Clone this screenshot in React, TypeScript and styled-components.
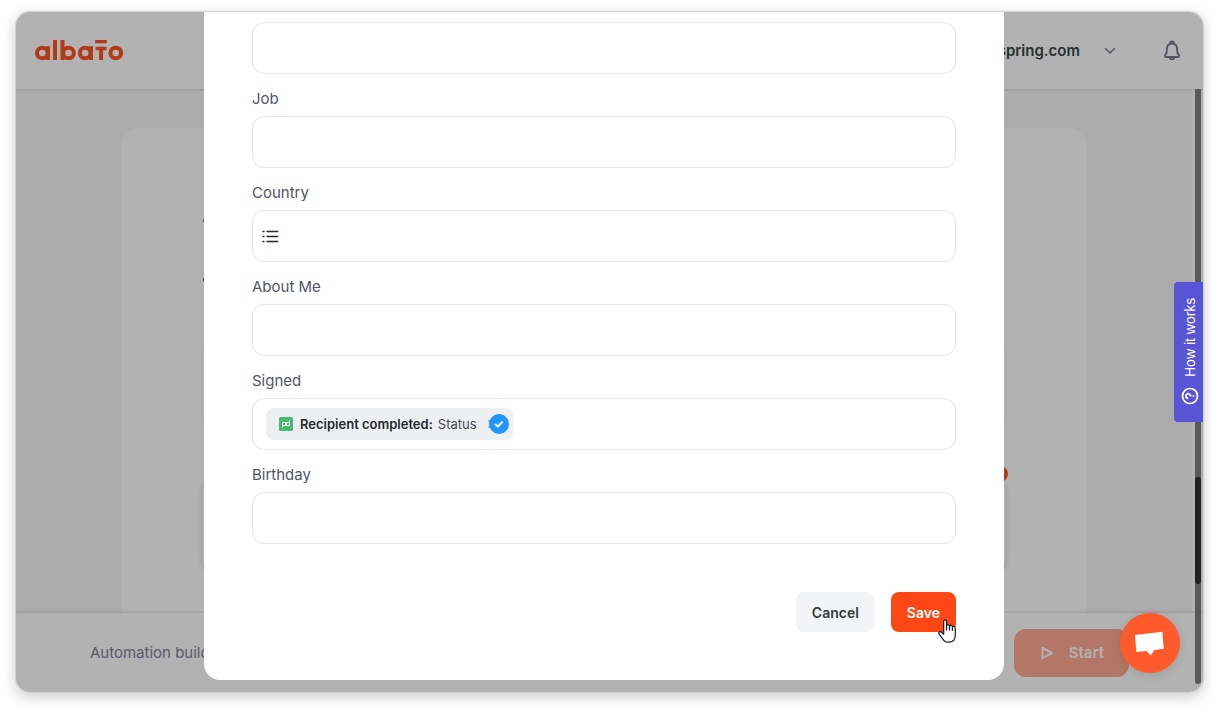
import React from "react";
import styled, { createGlobalStyle, css } from "styled-components";

const GlobalStyle = createGlobalStyle`
  *, *::before, *::after { box-sizing: border-box; }
  body {
    margin: 0;
    background: #fff;
    font-family: Inter, "Liberation Sans", sans-serif;
    color: #2b3135;
  }
  button, input { font-family: inherit; }
  svg { flex: none; }
`;

const Page = styled.div`
  display: flow-root;
`;

const Frame = styled.div`
  position: relative;
  display: grid;
  grid-template-columns: minmax(0, 1fr);
  grid-template-rows: 77px 1fr 79px;
  min-height: calc(100vh - 32px);
  margin: 12px 16px 20px;
  border-radius: 14px;
  overflow: clip;
  box-shadow: 0 0 0 1px #d0d1d1, 0 4px 14px 1px rgba(0, 0, 0, 0.2);
`;

const Header = styled.header`
  grid-area: 1 / 1;
  z-index: 1;
  display: flex;
  align-items: center;
  padding: 0 22px 0 19px;
  background: #fff;
  box-shadow: 0 1px 3px rgba(0, 0, 0, 0.12);
`;

const LogoLink = styled.a`
  display: flex;
  margin-right: auto;
`;

const IconButton = styled.button`
  display: flex;
  padding: 0;
  border: 0;
  background: none;
  color: #787b90;
`;

const Account = styled.button`
  display: flex;
  align-items: center;
  gap: 24px;
  margin-right: 47px;
  padding: 0;
  border: 0;
  background: none;
  color: #787b90;
`;

const AccountName = styled.span`
  color: #3c4444;
  font-size: 15px;
  font-weight: 600;
  line-height: 22px;
`;

const Main = styled.main`
  grid-area: 2 / 1;
  display: flex;
  justify-content: center;
  padding: 39px 11px 0 0;
  background: linear-gradient(to left, #fff 11px, #f7f7f7 11px);
`;

const Sheet = styled.section`
  flex: 0 1 966px;
  padding: 91px 82px 0;
  border-radius: 20px 20px 0 0;
  background: #fff;
`;

const Hints = styled.ul`
  display: grid;
  gap: 56px;
  margin: 0 0 55px;
  padding: 0;
  list-style: none;
`;

const Hint = styled.li`
  width: 8px;
  height: 3px;
  background: #8a6a2c;
`;

const Steps = styled.div`
  display: grid;
  gap: 52px;
`;

const Step = styled.div<{ $raised?: boolean }>`
  position: relative;
  height: 92px;
  border-radius: 12px;
  background: #fff;
  box-shadow: 0 0 ${(p) => (p.$raised ? "6px" : "2px")} rgba(0, 0, 0, 0.2);
`;

const StepBadge = styled.span`
  position: absolute;
  top: -14px;
  right: -3px;
  width: 16px;
  height: 16px;
  border-radius: 50%;
  background: #ff5722;
`;

const Footer = styled.footer`
  grid-area: 3 / 1;
  display: flex;
  align-items: center;
  justify-content: space-between;
  padding: 0 74px;
  background: #fff;
  box-shadow: 0 -1px 3px rgba(0, 0, 0, 0.14);
`;

const FooterText = styled.span`
  color: #7f8298;
  font-size: 15px;
  line-height: 22px;
`;

const StartButton = styled.button`
  display: flex;
  align-items: center;
  gap: 14px;
  height: 48px;
  padding: 0 25px;
  border: 0;
  border-radius: 12px;
  background: #ffab94;
  color: #fff;
  font-size: 15px;
  font-weight: 600;
`;

const Overlay = styled.div`
  grid-area: 1 / 1 / 4 / 2;
  z-index: 2;
  display: flex;
  align-items: flex-start;
  justify-content: center;
  padding: 0 11px 12px 0;
  background: rgba(0, 0, 0, 0.3);
`;

const Modal = styled.form`
  flex: 0 1 800px;
  padding: 10px 48px 48px;
  border-radius: 0 0 16px 16px;
  background: #fff;
`;

const Field = styled.div`
  display: grid;
  gap: 6px;
  margin-bottom: 14px;
`;

const Label = styled.label`
  color: #545567;
  font-size: 15px;
  line-height: 22px;
`;

const Control = styled.div<{ $tight?: boolean }>`
  display: flex;
  align-items: center;
  gap: 12px;
  height: 52px;
  padding: 0 ${(p) => (p.$tight ? "9px" : "13px")};
  border: 1px solid #e4e6e8;
  border-radius: 12px;
  background: #fff;
`;

const TextInput = styled.input`
  flex: 1;
  min-width: 0;
  height: 48px;
  padding: 0;
  border: 0;
  outline: 0;
  background: none;
  font-size: 15px;
`;

const Chip = styled.span`
  position: relative;
  display: flex;
  align-items: center;
  height: 32px;
  padding: 0 16px 0 13px;
  border-radius: 8px;
  background: #eeeff1;
  font-size: 13px;
  line-height: 20px;
  white-space: nowrap;
  color: #454a52;
`;

const ChipName = styled.strong`
  margin: 0 5px 0 7px;
  font-weight: 600;
  color: #24292c;
`;

const ChipRemove = styled.button`
  display: flex;
  margin-left: 10px;
  padding: 0;
  border: 0;
  background: none;
  color: #787b90;
`;

const ChipCheck = styled.span`
  position: absolute;
  top: 6px;
  right: 4px;
  display: flex;
  border-radius: 50%;
  background: #2196fa;
`;

const Actions = styled.div`
  position: relative;
  display: flex;
  justify-content: flex-end;
  gap: 16px;
  margin-top: 48px;
`;

const Button = styled.button<{ $primary?: boolean }>`
  height: 40px;
  padding: 0 16px;
  border: 0;
  border-radius: 8px;
  background: #f3f4f6;
  color: #333b3b;
  font-size: 14px;
  font-weight: 600;
  ${(p) =>
    p.$primary &&
    css`
      background: #ff4716;
      color: #fff;
    `}
`;

const Pointer = styled.svg`
  position: absolute;
  right: 0;
  bottom: -11px;
`;

const ScrollTrack = styled.div`
  position: absolute;
  z-index: 3;
  top: 77px;
  right: 2px;
  bottom: 8px;
  width: 6px;
  border-radius: 0 0 3px 3px;
  background: #595959;
`;

const ScrollThumb = styled.div`
  height: 18%;
  margin-top: 388px;
  border-radius: 3px;
  background: #222;
`;

const HelpTab = styled.button`
  position: absolute;
  z-index: 4;
  top: 50%;
  right: 0;
  display: flex;
  align-items: center;
  gap: 10px;
  width: 29px;
  height: 140px;
  margin-top: -70px;
  padding: 17px 3px 17px 0;
  border: 0;
  border-radius: 0 4px 4px 0;
  background: #5a55d6;
  color: #fff;
  font-family: "Liberation Sans", Arial, sans-serif;
  font-size: 14px;
  line-height: 20px;
  white-space: nowrap;
  writing-mode: vertical-rl;
  transform: rotate(180deg);
`;

const ChatButton = styled.button`
  position: absolute;
  z-index: 4;
  right: 23px;
  bottom: 19px;
  padding: 0;
  width: 60px;
  height: 60px;
  border: 0;
  border-radius: 50%;
  background: #ff5a2c;
  box-shadow: 0 2px 10px rgba(0, 0, 0, 0.12);
`;

const Logo = () => (
  <svg width="88" height="22" viewBox="0 0 88 22" role="img" aria-label="albato">
    <g fill="none" stroke="#ff5322" strokeWidth="4">
      <circle cx="7.300" cy="13" r="5.300" />
      <circle cx="33.500" cy="13" r="5.300" />
      <circle cx="50.200" cy="13" r="5.300" />
      <circle cx="80.800" cy="13" r="5.300" />
    </g>
    <g fill="#ff5322">
      <rect x="11" y="6.200" width="4" height="13.800" />
      <rect x="18" y="0" width="4" height="20" />
      <rect x="25.500" y="0" width="4" height="20" />
      <rect x="54" y="6.200" width="4" height="13.800" />
      <rect x="60.200" y="0" width="11.600" height="3.300" />
      <rect x="60.600" y="6.800" width="11" height="3.400" />
      <rect x="64.100" y="6.800" width="4" height="13.200" />
    </g>
  </svg>
);

const ChevronDown = () => (
  <svg width="12" height="8" viewBox="0 0 12 8" fill="none" stroke="currentColor" strokeWidth="1.500" strokeLinecap="round" strokeLinejoin="round" aria-hidden="true">
    <path d="M1.500 1.500 6 6l4.500-4.500" />
  </svg>
);

const Bell = () => (
  <svg width="18" height="22" viewBox="0 0 18 22" fill="none" stroke="currentColor" strokeWidth="2" strokeLinecap="round" strokeLinejoin="round" aria-hidden="true">
    <path d="M7 3.400a2 2 0 0 1 4 0" />
    <path d="M9 3.500a5.200 5.200 0 0 0-5.200 5.200v2.800c0 1.500-.4 2.100-1.400 3.200-1 1.100-.7 2.300.8 2.300h11.600c1.500 0 1.800-1.200.8-2.300-1-1.100-1.400-1.700-1.400-3.200V8.700A5.200 5.200 0 0 0 9 3.500Z" />
    <path d="M7 18.300c.5.700 1.100 1 2 1s1.500-.3 2-1" />
  </svg>
);

const PlayIcon = () => (
  <svg width="16" height="16" viewBox="0 0 16 16" fill="none" stroke="currentColor" strokeWidth="2" strokeLinejoin="round" aria-hidden="true">
    <path d="M3.500 2.800v10.400l9.500-5.200Z" />
  </svg>
);

const ListIcon = () => (
  <svg width="18" height="14" viewBox="0 0 18 14" stroke="#22282a" strokeWidth="1.300" strokeLinecap="round" aria-hidden="true">
    <path d="M1 2.500h1M1 7.500h1M1 12.500h1M5 2.500h10.800M5 7.500h10.800M5 12.500h10.800" />
  </svg>
);

const DocIcon = () => (
  <svg width="14" height="14" viewBox="0 0 14 14" aria-hidden="true">
    <rect width="14" height="14" rx="1.500" fill="#47b972" />
    <path d="M3.500 10.500v-5h3v3h-3M10.500 3.500v5h-3v-3h3" fill="none" stroke="#fff" strokeWidth="1" />
  </svg>
);

const CrossIcon = () => (
  <svg width="10" height="10" viewBox="0 0 10 10" stroke="currentColor" strokeWidth="1.300" aria-hidden="true">
    <path d="M1.500 1.500l7 7M8.500 1.500l-7 7" />
  </svg>
);

const CheckIcon = () => (
  <svg width="20" height="20" viewBox="0 0 20 20" fill="none" stroke="#fff" strokeWidth="2" aria-hidden="true">
    <path d="M6.200 10l2.700 2.600 4.700-5" />
  </svg>
);

const QuestionIcon = () => (
  <svg width="18" height="18" viewBox="0 0 18 18" fill="none" stroke="currentColor" strokeWidth="1.700" aria-hidden="true">
    <circle cx="9" cy="9" r="7.500" />
    <path d="M6.600 7.300c0-3.100 4.800-3.100 4.800 0 0 1.600-2.400 1.500-2.400 3.200M9 11.700v1.700" transform="rotate(90 9 9)" />
  </svg>
);

const ChatIcon = () => (
  <svg width="60" height="60" viewBox="0 0 60 60" fill="#fff" aria-hidden="true">
    <path d="M15 22 42.400 18.700 43.700 35.800 34.500 37 30.600 42.600 26.500 38 16.300 39Z" />
  </svg>
);

const HandPointer = () => (
  <Pointer width="18" height="24" viewBox="0 0 18 24" fill="#fff" stroke="#14142b" strokeWidth="1.200" strokeLinejoin="round" strokeLinecap="round" aria-hidden="true">
    <path d="M5.700 15.200V2.200C5.700.3 8.600.3 8.600 2.200V6.500C9.300 5.400 11.400 5.700 11.500 7 12.300 6 14.300 6.500 14.400 7.800 15.300 7 17.300 7.500 17.300 9.200V16C17.300 21 14.500 23.200 10.500 23.200 7 23.200 5.500 21.500 4.200 19.200L1 14.800C.2 13.500 1.800 12 3.200 13Z" />
    <path d="M8.600 6.500v4.500M11.500 7v4M14.400 7.800v3.500" fill="none" />
  </Pointer>
);

type FormFieldProps = {
  id: string;
  label: string;
  tight?: boolean;
  children?: React.ReactNode;
};

const FormField = ({ id, label, tight, children }: FormFieldProps) => (
  <Field>
    <Label htmlFor={id}>{label}</Label>
    <Control $tight={tight}>
      {children}
      <TextInput id={id} type="text" />
    </Control>
  </Field>
);

export default function App() {
  return (
    <Page>
      <GlobalStyle />
      <Frame>
        <Header>
          <LogoLink href="#">
            <Logo />
          </LogoLink>
          <Account type="button">
            <AccountName>spring.com</AccountName>
            <ChevronDown />
          </Account>
          <IconButton type="button" aria-label="Notifications">
            <Bell />
          </IconButton>
        </Header>

        <Main>
          <Sheet>
            <Hints>
              <Hint />
              <Hint />
            </Hints>
            <Steps>
              <Step />
              <Step $raised>
                <StepBadge />
              </Step>
            </Steps>
          </Sheet>
        </Main>

        <Footer>
          <FooterText>Automation build</FooterText>
          <StartButton type="button">
            <PlayIcon />
            Start
          </StartButton>
        </Footer>

        <Overlay>
          <Modal onSubmit={(e) => e.preventDefault()}>
            <Field>
              <Control>
                <TextInput type="text" aria-label="Value" />
              </Control>
            </Field>
            <FormField id="job" label="Job" />
            <FormField id="country" label="Country" tight>
              <ListIcon />
            </FormField>
            <FormField id="about" label="About Me" />
            <FormField id="signed" label="Signed">
              <Chip>
                <DocIcon />
                <ChipName>Recipient completed:</ChipName>
                Status
                <ChipRemove type="button" aria-label="Remove">
                  <CrossIcon />
                </ChipRemove>
                <ChipCheck>
                  <CheckIcon />
                </ChipCheck>
              </Chip>
            </FormField>
            <FormField id="birthday" label="Birthday" />
            <Actions>
              <Button type="button">Cancel</Button>
              <Button type="submit" $primary>
                Save
              </Button>
              <HandPointer />
            </Actions>
          </Modal>
        </Overlay>

        <ScrollTrack>
          <ScrollThumb />
        </ScrollTrack>
        <HelpTab type="button">
          <QuestionIcon />
          How it works
        </HelpTab>
        <ChatButton type="button" aria-label="Open chat">
          <ChatIcon />
        </ChatButton>
      </Frame>
    </Page>
  );
}
